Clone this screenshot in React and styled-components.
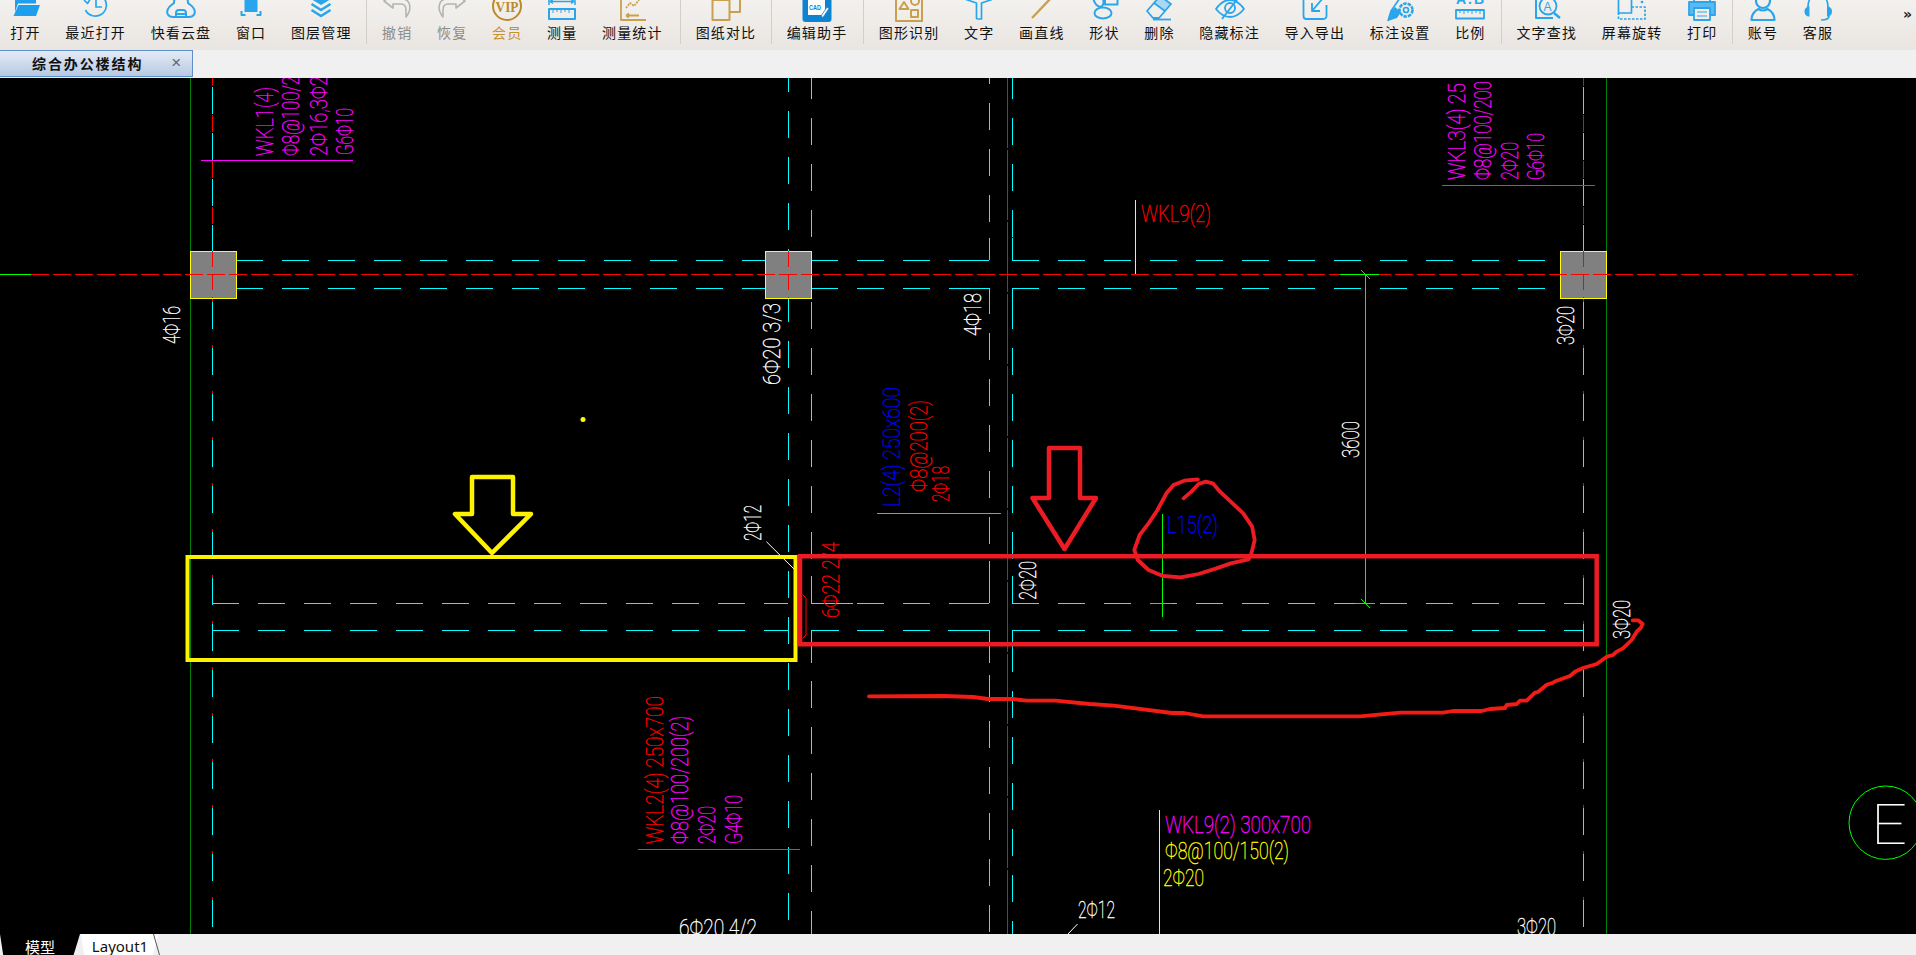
import React from 'react';
import styled, { createGlobalStyle } from 'styled-components';

const BLUE = '#2aa5ec';
const GOLD = '#c9a050';
const CJK = '"Noto Sans CJK SC", "Liberation Sans", sans-serif';

const Global = createGlobalStyle`
  html, body { margin: 0; padding: 0; background: #000; overflow: hidden; }
  #root { width: 1916px; height: 955px; }
`;

/***** Layout *****/
const Page = styled.div`
  width: 1916px;
  height: 955px;
  display: flex;
  flex-direction: column;
  overflow: hidden;
  font-family: ${CJK};
`;
const Toolbar = styled.div`
  height: 50px;
  flex: none;
  display: flex;
  overflow: hidden;
  background: linear-gradient(#f3f1ee, #e9e5e1);
  & > :first-child { margin-left: -2px; }
`;
const Tool = styled.div`
  flex: none;
  padding: 0 12.35px;
  display: flex;
  flex-direction: column;
  align-items: center;
  height: 50px;
`;
const IconBox = styled.div`
  height: 22px;
  width: 30px;
  overflow: hidden;
  flex: none;
  svg { display: block; width: 30px; height: 32px; margin-top: -10px; }
`;
const ToolLabel = styled.div`
  font-size: 14px;
  line-height: 20px;
  letter-spacing: 1.15px;
  white-space: nowrap;
  color: ${p => p.$color || '#111'};
`;
const Sep = styled.div`
  flex: none;
  width: 1px;
  height: 44px;
  background: #d2cfcb;
  margin: 0 2.5px 0 ${p => 2.3 + p.$extra}px;
`;
const More = styled.div`
  margin-left: auto;
  margin-right: 4px;
  margin-top: 6px;
  font: bold 14px "DejaVu Sans", sans-serif;
  color: #222;
`;
const TabRow = styled.div`
  height: 28px;
  flex: none;
  background: #f0f0f0;
`;
const DocTab = styled.div`
  width: 193px;
  height: 27px;
  box-sizing: border-box;
  border: 1px solid #5f8fc9;
  border-left: none;
  background: linear-gradient(#e4ebf6, #b6c9e3);
  display: flex;
  align-items: center;
  font-size: 14px;
  line-height: 20px;
  font-weight: 700;
  letter-spacing: 1.9px;
  padding: 0 0 2px 32px;
  color: #111;
`;
const CloseX = styled.span`
  margin-left: auto;
  margin-right: 9px;
  font: 17px "Liberation Sans", sans-serif;
  color: #666;
`;
const Canvas = styled.div`
  flex: 1;
  min-height: 0;
  background: #000;
  svg { display: block; width: 1916px; height: 856px; }
`;
const BottomBar = styled.div`
  height: 21px;
  flex: none;
  background: #f0f0f0;
  display: flex;
  align-items: stretch;
`;
const ModelTab = styled.div`
  width: 80px;
  background: #000;
  color: #fff;
  font-size: 15px;
  line-height: 25px;
  text-align: center;
  clip-path: polygon(0 0, 100% 0, 92% 100%, 4% 100%);
`;
const LayoutTab = styled.div`
  width: 78px;
  margin-left: 1px;
  background: #fff;
  color: #111;
  font: 15px/25px "Noto Sans", sans-serif;
  text-align: center;
  clip-path: polygon(0 0, 100% 0, 92% 100%, 4% 100%);
`;
const TabSlash = styled.div`
  width: 1px;
  background: #555;
  transform: skewX(16deg);
  margin-left: ${p => p.$gap}px;
`;

/***** Drawing parts *****/
const CyanLine = styled.line`
  stroke: #00ffff;
  stroke-width: 1;
  stroke-dasharray: ${p => p.$solid ? 'none' : '27 19'};
  shape-rendering: crispEdges;
`;
const Plain = styled.line`
  stroke: ${p => p.$color};
  stroke-width: 1;
  stroke-dasharray: ${p => p.$dash || 'none'};
  shape-rendering: ${p => p.$smooth ? 'auto' : 'crispEdges'};
`;
const Markup = styled.path`
  fill: none;
  stroke: ${p => p.$color};
  stroke-width: ${p => p.$w || 4.5};
  stroke-linejoin: ${p => p.$join || 'round'};
  stroke-linecap: round;
`;
const Pillar = styled.rect`
  fill: #808080;
  stroke: #ffff00;
  stroke-width: 1;
  width: 46px;
  height: 47px;
  shape-rendering: crispEdges;
`;
const CadText = styled.text`
  font-family: Roboto, "Liberation Sans", sans-serif;
  font-weight: 100;
  fill: ${p => p.$color};
  stroke: ${p => p.$color};
  stroke-width: ${p => p.$bold ?? 0.4}px;
  font-size: ${p => p.$size || 24}px;
`;

/***** Toolbar icons, in a 30x32 box whose top 10px are cut off by the window *****/
const Svg = ({ children, color = BLUE, w = 1.7 }) => (
  <svg viewBox="0 0 30 32" fill="none" stroke={color} strokeWidth={w} strokeLinejoin="round">{children}</svg>
);

const icons = {
  folder: <Svg w={0}>
    <path fill="#1d9fee" d="M4 4h9l2 3h10v6.5H7L4 22z" />
    <path fill="#1d9fee" d="M7.5 15H29l-4 11H2.5z" />
  </Svg>,
  clock: <Svg>
    <path d="M6 8a11 11 0 1 1-1.5 12" />
    <path d="M3 10l3.5 3.5L9 9.5" />
    <path d="M15 9v8h6" />
  </Svg>,
  cloud: <Svg w={2}>
    <path d="M7 27C2 27 0 23 2 19c1-3 4-4 6-6 0-5 3-10 7-10s7 5 7 10c2 2 5 3 6 6 2 4 0 8-5 8z" />
    <path d="M10 27v-4a3 3 0 0 1 3-3h4a3 3 0 0 1 3 3v4M10 24h10" />
  </Svg>,
  frame: <Svg w={2}>
    <rect x="8.5" y="8" width="13" height="14" fill={BLUE} stroke="none" />
    <path d="M5.5 21v4h4M24.5 21v4h-4M5.5 9V5h4M24.5 9V5h-4" />
  </Svg>,
  layers: <Svg w={2.6}>
    <path d="M15 3l10 6-10 6-10-6z" fill={BLUE} stroke="none" />
    <path d="M5.5 14l9.5 6 9.5-6M5.5 20l9.5 6 9.5-6" />
  </Svg>,
  undo: <Svg color="#b4b4b4" w={1.6}>
    <path d="M11 4L2 11l9 7v-4h8c3 0 5 2 5 6v7c4-5 5-9 3-14-2-4-6-5-16-5z" />
  </Svg>,
  redo: <Svg color="#b4b4b4" w={1.6}>
    <path d="M19 4l9 7-9 7v-4h-8c-3 0-5 2-5 6v7c-4-5-5-9-3-14 2-4 6-5 16-5z" />
  </Svg>,
  vip: <Svg color="#bd8a2b" w={2}>
    <circle cx="15" cy="16" r="14" />
    <text x="3.5" y="22" fontSize="14" fontWeight="700" fontFamily='"Liberation Serif", serif' fill="#bd8a2b" stroke="none" textLength="23" lengthAdjust="spacingAndGlyphs">VIP</text>
  </Svg>,
  ruler: <Svg w={1.5}>
    <path d="M2 8v7M28 8v7M3 11.5h24M3 11.5l3-2M3 11.5l3 2M27 11.5l-3-2M27 11.5l-3 2" />
    <rect x="2" y="19" width="26" height="10" strokeWidth="2" />
    <path d="M6 19v4M10 19v3M14 19v4M18 19v3M22 19v4" strokeWidth="1" />
  </Svg>,
  stats: <Svg color={GOLD} w={1.8}>
    <path d="M4 8v22h25" />
    <path d="M9 18l4-5 4 3 5-6" strokeDasharray="2 1" />
    <path d="M9 25.5h13M9 25.5l3-2M9 25.5l3 2" />
  </Svg>,
  compare: <Svg color={GOLD} w={2}>
    <rect x="1.5" y="10" width="17" height="20" />
    <path d="M18.5 22H29V5H11v5" />
  </Svg>,
  cad: <Svg w={0}>
    <rect x="0.5" y="0" width="29" height="32" rx="3" fill="#0e84d0" />
    <path d="M6 0h17v25H6z" fill="#fff" />
    <text x="7" y="20" fontSize="8" fontWeight="700" fontFamily='"Liberation Sans", sans-serif' fill="#0e84d0" textLength="12" lengthAdjust="spacingAndGlyphs">CAD</text>
    <path d="M19 26l6-9 2 1.5-6 9z" fill="#fff" stroke="#0e84d0" strokeWidth="0.8" />
  </Svg>,
  shapes: <Svg color={GOLD} w={2}>
    <rect x="2" y="2" width="26" height="29" />
    <path d="M10 12l4.5 7h-9z" />
    <circle cx="21" cy="11" r="4" />
    <rect x="17" y="20" width="7" height="7" />
  </Svg>,
  arrow: <Svg w={1.7}>
    <path d="M12.5 29h5V13L28 9.5M12.5 29V13L2 9.5" />
  </Svg>,
  line: <Svg color={GOLD} w={2.4}><path d="M5 28L25 7" /></Svg>,
  shape: <Svg w={2}>
    <rect x="16" y="2" width="12.5" height="12.5" />
    <ellipse cx="9.5" cy="10" rx="4.5" ry="7" transform="rotate(-25 9.5 10)" />
    <ellipse cx="14" cy="23" rx="8.5" ry="5.5" />
  </Svg>,
  eraser: <Svg w={1.8}>
    <path d="M16 6L27 14l-6 7-11-8z" fill="#a8d8f5" />
    <path d="M10 13l-7 8 6 7h6l6-7" />
    <path d="M9 29.5h18" />
  </Svg>,
  eye: <Svg w={1.8}>
    <path d="M1 19c4-6 9-9 14-9s10 3 14 9c-4 5-9 8-14 8S5 24 1 19z" />
    <circle cx="15" cy="18" r="5" />
    <path d="M7 29L24 7" />
  </Svg>,
  exportBox: <Svg w={1.8}>
    <path d="M12 5H6.5a3 3 0 0 0-3 3v18a3 3 0 0 0 3 3h17a3 3 0 0 0 3-3V15" />
    <path d="M12 21l11-13M12 13v8h8" />
  </Svg>,
  penGear: <Svg w={1.7}>
    <path d="M3 31l3-10 9-13" />
    <path d="M3 31l9-3 4-6-6-5-4 4z" fill={BLUE} stroke="none" />
    <circle cx="21" cy="20" r="6.5" strokeDasharray="3.5 1" strokeWidth="2.6" />
    <circle cx="21" cy="20" r="2.5" />
  </Svg>,
  scale: <Svg w={1.8}>
    <text x="1" y="14" fontSize="14" fontWeight="700" fontFamily='"Liberation Sans", sans-serif' fill={BLUE} stroke="none" textLength="28" lengthAdjust="spacing">A.B</text>
    <rect x="1" y="20" width="28" height="8.5" />
    <path d="M5 20v3M9 20v4M13 20v3M17 20v4M21 20v3M25 20v4" strokeWidth="1" />
  </Svg>,
  findText: <Svg w={1.8}>
    <path d="M4 9v19h17" strokeWidth="2" />
    <circle cx="16" cy="16" r="8.5" />
    <text x="11.5" y="20.5" fontSize="12" fontFamily='"Liberation Sans", sans-serif' fill={BLUE} stroke="none">A</text>
    <path d="M22 23l6 5" strokeWidth="2.4" />
  </Svg>,
  rotate: <Svg w={1.7}>
    <rect x="1.5" y="5" width="13" height="18" />
    <path d="M14.5 17H28v12H1.5v-6" strokeDasharray="2.5 1.5" />
    <circle cx="25" cy="12" r="1.3" fill={BLUE} stroke="none" />
  </Svg>,
  printer: <Svg w={1.8}>
    <rect x="7" y="5" width="16" height="9" />
    <path d="M7 25H2V12h26v13h-5" fill="#5bb8f0" stroke={BLUE} />
    <rect x="7" y="18" width="16" height="12" fill="#f1eeea" />
    <path d="M10 22h10M10 26h10" strokeWidth="1.2" />
  </Svg>,
  person: <Svg w={2.2}>
    <circle cx="15" cy="11" r="7" />
    <path d="M3.5 30c0-6 3-9 7-11 3 2 6 2 9 0 4 2 7 5 7 11z" />
  </Svg>,
  headset: <Svg w={1.7}>
    <path d="M5 17C5 9 9 5 15 5s10 4 10 12" />
    <path d="M6.5 16.5c-3 0-5 2-5 5s2 5 5 5z" fill={BLUE} stroke="none" />
    <path d="M24 16.5c3 0 5 2 5 5s-2 5-5 5z" fill={BLUE} stroke="none" />
    <path d="M26 26c0 3-3 4-8 4" />
  </Svg>,
};

const groups = [
  [['打开', 'folder'], ['最近打开', 'clock'], ['快看云盘', 'cloud'], ['窗口', 'frame'], ['图层管理', 'layers']],
  [['撤销', 'undo', '#8c8c8c'], ['恢复', 'redo', '#8c8c8c'], ['会员', 'vip', '#c8912e'], ['测量', 'ruler'], ['测量统计', 'stats']],
  [['图纸对比', 'compare']],
  [['编辑助手', 'cad']],
  [['图形识别', 'shapes'], ['文字', 'arrow'], ['画直线', 'line'], ['形状', 'shape'], ['删除', 'eraser'], ['隐藏标注', 'eye'],
    ['导入导出', 'exportBox'], ['标注设置', 'penGear'], ['比例', 'scale']],
  [['文字查找', 'findText'], ['屏幕旋转', 'rotate'], ['打印', 'printer']],
  [['账号', 'person'], ['客服', 'headset']],
];
// the groups are not evenly spaced in the reference
const sepExtra = [0, 0, 2.5, 0, 1, 0.5, 0];

/***** Plan data, page coordinates *****/
// beams (horizontal) and walls (vertical), the phase is where a dash starts
const beams = [
  [236, 765, 260], [811, 989, 260], [1012, 1560, 260],
  [236, 765, 288], [811, 989, 288], [1012, 1560, 288],
  [212, 788, 603], [811, 989, 603], [1012, 1583, 603],
  [212, 788, 630], [811, 989, 630], [1012, 1583, 630],
];
const walls = [
  [212, 78, 251, 41], [212, 298, 934, 26], [1583, 78, 251, 41], [1583, 298, 934, 26],
  [788, 78, 251, 19], [788, 298, 934, 19],
  [811, 78, 251, 26], [811, 298, 603, 26], [811, 630, 934, 37],
  [989, 78, 260, 11], [989, 288, 603, 11], [989, 630, 934, 31],
  [1012, 78, 260, 26], [1012, 288, 603, 26], [1012, 630, 934, 1],
];
// solid runs where the beams turn into walls
const corners = [
  [970, 260, 989, 260], [989, 238, 989, 260], [1012, 260, 1038, 260], [1012, 238, 1012, 260],
  [970, 288, 989, 288], [989, 288, 989, 312], [1012, 288, 1038, 288], [1012, 288, 1012, 312],
  [811, 603, 853, 603], [811, 576, 811, 603], [962, 603, 989, 603], [989, 561, 989, 603],
  [1012, 603, 1036, 603], [1012, 576, 1012, 603],
  [811, 630, 839, 630], [811, 630, 811, 663], [948, 630, 989, 630], [989, 630, 989, 663],
  [1012, 630, 1040, 630], [1012, 630, 1012, 663],
];
const pillars = [[190, 251], [765, 251], [1560, 251]];
const axes = [212, 788, 1583];

// rotated labels: text, baseline x, start y, length
const upLabels = [
  ['WKL1(4)', 272.5, 156, 69, '#ff00ff'],
  ['Φ8@100/2', 299, 156, 80, '#ff00ff'],
  ['2Φ16,3Φ2', 327, 156, 80, '#ff00ff'],
  ['G6Φ10', 353, 155, 47, '#ff00ff'],
  ['4Φ16', 180, 344, 38, '#fff'],
  ['WKL3(4) 25', 1465, 180, 97, '#ff00ff'],
  ['Φ8@100/200', 1491, 180, 99, '#ff00ff'],
  ['2Φ20', 1518, 180, 38, '#ff00ff'],
  ['G6Φ10', 1544, 180, 47, '#ff00ff'],
  ['3Φ20', 1574, 345, 39, '#fff'],
  ['6Φ20 3/3', 780, 385, 82, '#fff'],
  ['4Φ18', 981, 336, 43, '#fff'],
  ['L2(4) 250x600', 900, 507, 120, '#0000ff'],
  ['Φ8@200(2)', 927, 492, 92, '#ff0000'],
  ['2Φ18', 948.5, 502, 36, '#ff0000'],
  ['2Φ12', 761, 541, 36, '#fff'],
  ['6Φ22 2/4', 839, 618, 76, '#ff0000'],
  ['2Φ20', 1036, 600, 39, '#fff'],
  ['3Φ20', 1630, 639, 39, '#fff'],
  ['3600', 1359, 458, 37, '#fff'],
  ['WKL2(4) 250x700', 663, 844, 148, '#ff0000'],
  ['Φ8@100/200(2)', 688, 844, 128, '#ff00ff'],
  ['2Φ20', 715, 844, 38, '#ff00ff'],
  ['G4Φ10', 741.5, 844, 49, '#ff00ff'],
];
// flat labels: text, x, baseline y, length
const flatLabels = [
  ['WKL9(2)', 1141, 222, 70, '#ff0000'],
  ['L15(2)', 1167, 533, 51, '#0000ff'],
  ['WKL9(2) 300x700', 1165, 833, 146, '#ff00ff'],
  ['Φ8@100/150(2)', 1165, 859, 124, '#ffff00'],
  ['2Φ20', 1163, 886, 41, '#ffff00'],
  ['2Φ12', 1078, 918, 37, '#fff'],
  ['6Φ20 4/2', 679, 936, 78, '#fff'],
  ['3Φ20', 1517, 935, 39, '#fff'],
];

const thin = [
  [201, 160, 353, 160, '#ff00ff'],
  [1442, 185, 1595, 185, '#ff00ff'],
  [638, 849, 800, 849, '#ff00ff'],
  [877, 513, 1001, 513, '#00ff00'],
  [1162, 514, 1162, 617, '#00ff00'],
  [1150, 603, 1172, 603, '#00ff00'],
  [1365, 274, 1365, 604, '#00ff00'],
  [1340, 274, 1379, 274, '#00ff00'],
  [1355, 603, 1375, 603, '#00ff00'],
  [1135, 200, 1135, 274, '#ffff00'],
  [1159, 810, 1159, 934, '#ffff00'],
  [0, 274, 31, 274, '#00ff00'],
];
const slanted = [
  [1361, 270, 1370, 279, '#00ff00'],
  [1361, 599, 1370, 608, '#00ff00'],
  [766.4, 541.7, 794, 569, '#fff'],
  [1077.5, 924, 1068, 934, '#fff'],
];

// hand drawn marks, read off the picture
const ring = [[1298, 385], [1320, 365], [1340, 342], [1360, 335], [1380, 340], [1400, 365], [1430, 395], [1465, 430],
  [1490, 470], [1497, 510], [1488, 550], [1480, 568], [1430, 580], [1390, 595], [1340, 612], [1290, 622], [1240, 618],
  [1200, 600], [1170, 570], [1160, 540], [1175, 495], [1200, 460], [1225, 420], [1250, 370], [1270, 345], [1300, 332], [1338, 328]]
  .map(([x, y]) => [720 + x / 2.8, 370 + y / 3]);
const stroke = [[869, 696.3], [944, 696], [973, 697], [988, 699], [1012, 699], [1026.6, 700.7], [1055.6, 700.7], [1089.6, 704],
  [1113.8, 705.7], [1172, 713], [1184, 713], [1203.5, 716.3], [1360, 716.3], [1400, 712.7], [1443, 712.7], [1453, 711],
  [1481.7, 711], [1490, 709], [1505, 708], [1506.7, 705], [1516.7, 704], [1520, 700.7], [1526.7, 700.7], [1535, 692.7],
  [1538, 692], [1546.7, 684.7], [1553, 682.7], [1556.7, 680.7], [1570, 676], [1575, 671.7], [1583, 668], [1596.7, 664],
  [1606.7, 656.7], [1613, 655], [1616.7, 651.7], [1623, 648.3], [1631.7, 640], [1636.7, 631.7], [1640.7, 628], [1642.7, 624],
  [1638, 620.3], [1632.7, 620.3]];
const toPath = pts => 'M' + pts.map(p => p.join(' ')).join('L');

const dashOffset = (start, phase) => (((start - phase) % 46) + 46) % 46;

const Plan = () => (
  <svg viewBox="0 78 1916 856">
    <Plain x1="190" y1="78" x2="190" y2="934" $color="#008000" />
    <Plain x1="1606" y1="78" x2="1606" y2="934" $color="#008000" />
    <Plain x1="1007" y1="78" x2="1007" y2="934" $color="#ff0000" $dash="70 2" />

    {axes.map(x => (
      <Plain key={x} x1={x} y1="78" x2={x} y2="934" $color="#ff0000" $dash="17 29" strokeDashoffset={(78 - 23) % 46} />
    ))}
    {walls.map(([x, y1, y2, phase], i) => (
      <CyanLine key={i} x1={x} y1={y1} x2={x} y2={y2} strokeDashoffset={dashOffset(y1, phase)} />
    ))}
    {beams.map(([x1, x2, y], i) => (
      <CyanLine key={i} x1={x1} y1={y} x2={x2} y2={y} />
    ))}
    {corners.map(([x1, y1, x2, y2], i) => (
      <CyanLine key={i} $solid x1={x1} y1={y1} x2={x2} y2={y2} />
    ))}

    {pillars.map(([x, y]) => <Pillar key={x} x={x} y={y} />)}
    {axes.map(x => (
      <Plain key={x} x1={x} y1="251" x2={x} y2="298" $color="#ff0000" $dash="16 7" />
    ))}
    <Plain x1="31" y1="274" x2="1858" y2="274" $color="#ff0000" $dash="18 4" />

    {thin.map(([x1, y1, x2, y2, c], i) => <Plain key={i} x1={x1} y1={y1} x2={x2} y2={y2} $color={c} />)}
    {slanted.map(([x1, y1, x2, y2, c], i) => <Plain key={i} $smooth x1={x1} y1={y1} x2={x2} y2={y2} $color={c} />)}
    <Markup $color="#ff0000" $w={1} $join="miter" d="M803 595l3 3v37l-3 3" />

    {upLabels.map(([t, x, y, len, c], i) => (
      <CadText key={i} transform={`translate(${x} ${y}) rotate(-90)`} $color={c} textLength={len} lengthAdjust="spacingAndGlyphs">{t}</CadText>
    ))}
    {flatLabels.map(([t, x, y, len, c], i) => (
      <CadText key={i} x={x} y={y} $color={c} textLength={len} lengthAdjust="spacingAndGlyphs">{t}</CadText>
    ))}

    <circle cx="583" cy="419.6" r="2.5" fill="#ffff00" />
    <circle cx="1885.7" cy="822.7" r="36.7" fill="none" stroke="#00ff00" />
    <CadText x="1871" y="844" $color="#fff" $size={55} $bold={0} textLength="36" lengthAdjust="spacingAndGlyphs">E</CadText>

    <Markup $color="#fff200" $w={4} $join="miter" d="M187.5 557h608v103h-608z" />
    <Markup $color="#ed1c24" $join="miter" d="M800 556.3h796.7v88H800z" />
    <Markup $color="#fff200" d="M472 477h41v37h18l-39 39-37-39h17z" />
    <Markup $color="#ed1c24" d="M1049 448h31v50h16l-31.5 51-32-51h16.5z" />
    <Markup $color="#ed1c24" $w={3.8} d={toPath(ring)} />
    <Markup $color="#f21c14" $w={3.8} d={toPath(stroke)} />
  </svg>
);

const App = () => (
  <Page>
    <Global />
    <Toolbar>
      {groups.map((group, g) => (
        <React.Fragment key={g}>
          {g > 0 && <Sep $extra={sepExtra[g]} />}
          {group.map(([label, icon, color]) => (
            <Tool key={label}>
              <IconBox>{icons[icon]}</IconBox>
              <ToolLabel $color={color}>{label}</ToolLabel>
            </Tool>
          ))}
        </React.Fragment>
      ))}
      <More>»</More>
    </Toolbar>
    <TabRow>
      <DocTab>综合办公楼结构<CloseX>×</CloseX></DocTab>
    </TabRow>
    <Canvas><Plan /></Canvas>
    <BottomBar>
      <ModelTab>模型</ModelTab>
      <LayoutTab>Layout1</LayoutTab>
      <TabSlash $gap={-3} />
    </BottomBar>
  </Page>
);

export default App;
